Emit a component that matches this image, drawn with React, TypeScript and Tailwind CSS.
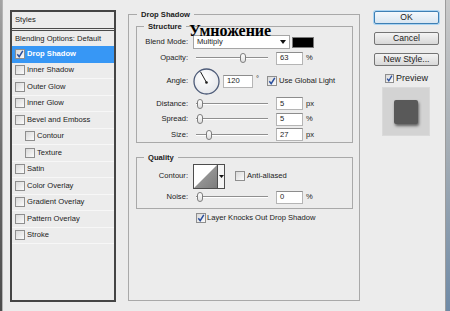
import React from 'react'

const styleRows = [
  { name: 'Drop Shadow', checked: true, active: true },
  { name: 'Inner Shadow' },
  { name: 'Outer Glow' },
  { name: 'Inner Glow' },
  { name: 'Bevel and Emboss' },
  { name: 'Contour', indent: true },
  { name: 'Texture', indent: true },
  { name: 'Satin' },
  { name: 'Color Overlay' },
  { name: 'Gradient Overlay' },
  { name: 'Pattern Overlay' },
  { name: 'Stroke' },
]

function Check({ checked = false, size = 10 }: { checked?: boolean; size?: number }) {
  return (
    <span
      className="inline-flex shrink-0 items-center justify-center border border-[#8e8e8e] bg-gradient-to-br from-[#d9d9d9] to-[#fbfbfb]"
      style={{ width: size, height: size }}
    >
      {checked && (
        <svg width={size - 2} height={size - 2} viewBox="0 0 8 8">
          <path d="M1.3 4.2 L3.2 6.6 L6.8 0.8" fill="none" stroke="#2a4f9e" strokeWidth="1.5" />
        </svg>
      )}
    </span>
  )
}

function Slider({ thumb }: { thumb: number }) {
  return (
    <div className="relative ml-[8px] h-[10px] w-[72px]">
      <div className="mt-[4px] h-[2px] w-full border-t border-[#8f8f8f] bg-white" />
      <div
        className="absolute top-0 h-[10px] w-[6px] rounded-[3px] border border-[#7d7d7d] bg-gradient-to-b from-white to-[#dedede]"
        style={{ left: thumb }}
      />
    </div>
  )
}

function Field({ value, w = 27 }: { value: string; w?: number }) {
  return (
    <div
      className="flex h-[13px] items-center border border-[#b5b5b5] border-t-[#8d8d8d] bg-white pl-[3px]"
      style={{ width: w }}
    >
      {value}
    </div>
  )
}

function Label({ children }: { children: React.ReactNode }) {
  return <div className="w-[51px] shrink-0 text-right">{children}</div>
}

function SliderRow({ label, thumb, value, unit, h }: { label: string; thumb: number; value: string; unit: string; h: number }) {
  return (
    <div className="flex items-center" style={{ height: h }}>
      <Label>{label}</Label>
      <Slider thumb={thumb} />
      <div className="ml-[8px]">
        <Field value={value} />
      </div>
      <span className="ml-[3px]">{unit}</span>
    </div>
  )
}

export default function App() {
  return (
    <div className="relative flex h-[311px] w-[450px] overflow-hidden bg-[#ececec] font-['Liberation_Sans',Arial,sans-serif] text-[7.6px] leading-none text-[#1b1b1b]">
      {/* left window edge */}
      <div className="h-full w-[3px] shrink-0 border-r border-[#b4b4b4] bg-gradient-to-b from-[#a4a4a4] via-[#6c6c6c] to-[#4c4c4c]" />

      {/* styles list */}
      <div className="ml-[7px] mt-[10px] flex h-[292px] w-[106px] shrink-0 flex-col border-2 border-[#454545]">
        <div className="flex h-[17px] items-center border-b border-[#4a4a4a] pl-[3px]">Styles</div>
        <div className="mt-[1px] flex h-[16px] items-center border-t border-[#4a4a4a] pl-[3px]">Blending Options: Default</div>
        {styleRows.map((r) => (
          <div
            key={r.name}
            className={
              'flex h-[16.5px] items-center gap-[2px] border-b ' +
              (r.active ? 'border-[#3797f5] bg-[#3797f5] font-bold text-white' : 'border-[#f7f7f7]') +
              (r.indent ? ' pl-[13px]' : ' pl-[3px]')
            }
          >
            <Check checked={r.checked} />
            <span>{r.name}</span>
          </div>
        ))}
      </div>

      {/* Drop Shadow group */}
      <div className="ml-[12px] mt-[14px] h-[287px] w-[232px] shrink-0 border border-[#a9a9a9]">
        <div className="-mt-[6px] ml-[8px] flex h-[11px] w-fit items-center bg-[#ececec] px-[4px] font-bold">Drop Shadow</div>

        <div className="ml-[7px] mt-[6px] w-[217px] border border-[#a9a9a9]">
          <div className="-mt-[6px] ml-[7px] flex h-[11px] w-fit items-center bg-[#ececec] px-[4px] font-bold">Structure</div>
          <div className="pt-[2px]">
            <div className="flex h-[16px] items-center">
              <Label>Blend Mode:</Label>
              <div className="ml-[5px] flex h-[14px] w-[97px] items-center justify-between border border-[#a5a5a5] bg-white pl-[3px] pr-[3px]">
                <span>Multiply</span>
                <svg width="6" height="4" viewBox="0 0 6 4">
                  <path d="M0 0 H6 L3 4 Z" fill="#111" />
                </svg>
              </div>
              <div className="ml-[2px] h-[11px] w-[22px] border border-[#7a7a7a] bg-black" />
            </div>
            <SliderRow label="Opacity:" thumb={44} value="63" unit="%" h={16} />
            <div className="flex h-[30px] items-center">
              <Label>Angle:</Label>
              <svg className="ml-[5px]" width="27" height="27" viewBox="0 0 27 27">
                <defs>
                  <radialGradient id="dial" cx="0.4" cy="0.35" r="0.7">
                    <stop offset="0" stopColor="#ffffff" />
                    <stop offset="1" stopColor="#e4e6ea" />
                  </radialGradient>
                </defs>
                <circle cx="13.5" cy="13.5" r="12.5" fill="url(#dial)" stroke="#4d5b78" strokeWidth="1.3" />
                <line x1="13.5" y1="14.5" x2="7.5" y2="3.8" stroke="#1c1c1c" strokeWidth="1" />
                <circle cx="13.5" cy="14.5" r="1.3" fill="#1c1c1c" />
              </svg>
              <div className="ml-[3px]">
                <Field value="120" w={30} />
              </div>
              <span className="ml-[3px] -mt-[4px]">°</span>
              <div className="ml-[8px] flex items-center gap-[2px]">
                <Check checked />
                <span>Use Global Light</span>
              </div>
            </div>
            <SliderRow label="Distance:" thumb={1} value="5" unit="px" h={15} />
            <SliderRow label="Spread:" thumb={1} value="5" unit="%" h={16} />
            <SliderRow label="Size:" thumb={10} value="27" unit="px" h={15} />
          </div>
        </div>

        <div className="ml-[7px] mt-[14px] w-[217px] border border-[#a9a9a9] pb-[3px]">
          <div className="-mt-[6px] ml-[7px] flex h-[11px] w-fit items-center bg-[#ececec] px-[4px] font-bold">Quality</div>
          <div className="flex h-[26px] items-center">
            <Label>Contour:</Label>
            <div className="ml-[5px] flex h-[25px] items-stretch border border-[#4d4d4d] bg-white">
              <svg width="23" height="23" viewBox="0 0 23 23">
                <defs>
                  <linearGradient id="cont" x1="0" y1="0" x2="1" y2="1">
                    <stop offset="0" stopColor="#a9a9a9" />
                    <stop offset="1" stopColor="#7c7c7c" />
                  </linearGradient>
                </defs>
                <path d="M0 23 L23 0 L23 23 Z" fill="url(#cont)" />
              </svg>
              <div className="flex w-[7px] items-center justify-center border-l border-[#4d4d4d] bg-[#f4f4f4]">
                <svg width="5" height="3" viewBox="0 0 5 3">
                  <path d="M0 0 H5 L2.5 3 Z" fill="#111" />
                </svg>
              </div>
            </div>
            <div className="ml-[10px] flex items-center gap-[2px]">
              <Check />
              <span>Anti-aliased</span>
            </div>
          </div>
          <SliderRow label="Noise:" thumb={1} value="0" unit="%" h={16} />
        </div>

        <div className="mt-[2px] flex h-[14px] items-center gap-[1px] pl-[67px]">
          <Check checked />
          <span>Layer Knocks Out Drop Shadow</span>
        </div>
      </div>

      {/* buttons */}
      <div className="ml-[14px] flex w-[65px] shrink-0 flex-col text-[8.6px]">
        <button className="mt-[11px] h-[13px] rounded-[2px] border border-[#3d7fb4] bg-gradient-to-b from-[#f3f8fc] to-[#d9e6f1] shadow-[0_0_0_1px_#a9d3f2]">OK</button>
        <button className="mt-[8px] h-[13px] rounded-[2px] border border-[#747474] bg-gradient-to-b from-[#f4f4f4] to-[#d8d8d8]">Cancel</button>
        <button className="mt-[8px] h-[13px] rounded-[2px] border border-[#747474] bg-gradient-to-b from-[#f4f4f4] to-[#d8d8d8]">New Style...</button>
        <div className="mt-[6px] flex h-[12px] items-center gap-[2px] pl-[11px] text-[9px]">
          <Check checked size={9} />
          <span>Preview</span>
        </div>
        <div className="ml-[8px] mt-[3px] flex h-[49px] w-[48px] items-center justify-center border border-[#dadada] bg-[#d3d3d3] pt-[1px]">
          <div className="h-[24px] w-[24px] rounded-[2px] bg-[#595959] shadow-[1px_2px_3px_rgba(0,0,0,0.55)]" />
        </div>
      </div>

      {/* right window edge */}
      <div className="ml-auto h-full w-[5px] shrink-0 border-l border-[#9c9c9c] bg-gradient-to-b from-[#c9c9c9] via-[#a3acb4] to-[#6f8aa6]" />

      <div className="absolute left-[189px] top-[25px] font-['Liberation_Serif',serif] text-[16px] font-bold leading-[12px] text-black">
        Умножение
      </div>
    </div>
  )
}
